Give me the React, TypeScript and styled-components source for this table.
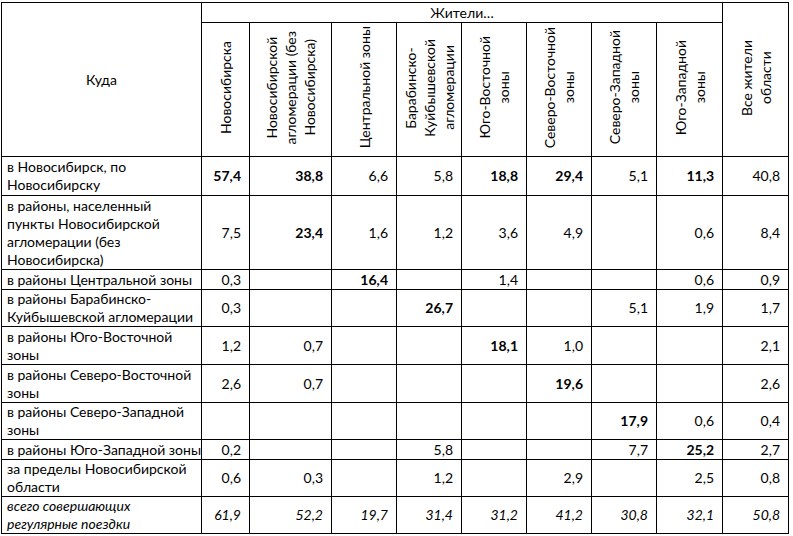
import React from "react";
import styled, { createGlobalStyle } from "styled-components";

const GlobalStyle = createGlobalStyle`
  body {
    margin: 0;
    background: #fff;
    font-family: "Lato", "Noto Sans", sans-serif;
    color: #000;
  }
`;

const widths = [200, 48, 82, 65, 65, 65, 65, 65, 66, 66];

const heads = [
  ["Новосибирска"],
  ["Новосибирской", "агломерации (без", "Новосибирска)"],
  ["Центральной зоны"],
  ["Барабинско-", "Куйбышевской", "агломерации"],
  ["Юго-Восточной", "зоны"],
  ["Северо-Восточной", "зоны"],
  ["Северо-Западной", "зоны"],
  ["Юго-Западной", "зоны"],
];

// "*" в начале значения — жирный шрифт
const rows = [
  {
    h: 39,
    label: ["в Новосибирск, по", "Новосибирску"],
    vals: ["*57,4", "*38,8", "6,6", "5,8", "*18,8", "*29,4", "5,1", "*11,3", "40,8"],
  },
  {
    h: 74,
    label: ["в районы, населенный", "пункты Новосибирской", "агломерации (без", "Новосибирска)"],
    vals: ["7,5", "*23,4", "1,6", "1,2", "3,6", "4,9", "", "0,6", "8,4"],
  },
  {
    h: 20,
    label: ["в районы Центральной зоны"],
    vals: ["0,3", "", "*16,4", "", "1,4", "", "", "0,6", "0,9"],
  },
  {
    h: 37,
    label: ["в районы Барабинско-", "Куйбышевской агломерации"],
    vals: ["0,3", "", "", "*26,7", "", "", "5,1", "1,9", "1,7"],
  },
  {
    h: 38,
    label: ["в районы Юго-Восточной", "зоны"],
    vals: ["1,2", "0,7", "", "", "*18,1", "1,0", "", "", "2,1"],
  },
  {
    h: 38,
    label: ["в районы Северо-Восточной", "зоны"],
    vals: ["2,6", "0,7", "", "", "", "*19,6", "", "", "2,6"],
  },
  {
    h: 37,
    label: ["в районы Северо-Западной", "зоны"],
    vals: ["", "", "", "", "", "", "*17,9", "0,6", "0,4"],
  },
  {
    h: 20,
    label: ["в районы Юго-Западной зоны"],
    vals: ["0,2", "", "", "5,8", "", "", "7,7", "*25,2", "2,7"],
  },
  {
    h: 37,
    label: ["за пределы Новосибирской", "области"],
    vals: ["0,6", "0,3", "", "1,2", "", "2,9", "", "2,5", "0,8"],
  },
];

const total = {
  h: 37,
  label: ["всего совершающих", "регулярные поездки"],
  vals: ["61,9", "52,2", "19,7", "31,4", "31,2", "41,2", "30,8", "32,1", "50,8"],
};

const Page = styled.div`
  padding: 2px 0 0 1px;
`;

const Table = styled.table`
  border-collapse: collapse;
  table-layout: fixed;
  width: 787px;
  font-size: 14px;
  line-height: 18px;
`;

const Cell = styled.td<{ $align?: string; $bold?: boolean; $italic?: boolean }>`
  border: 1px solid #000;
  padding: 0 8px 0 5px;
  vertical-align: middle;
  text-align: ${(p) => p.$align || "right"};
  font-weight: ${(p) => (p.$bold ? 700 : 400)};
  font-style: ${(p) => (p.$italic ? "italic" : "normal")};
  white-space: nowrap;
  overflow: hidden;
`;

const HeadCell = styled.th`
  border: 1px solid #000;
  padding: 0;
  font-weight: 400;
  text-align: center;
  vertical-align: middle;
`;

const Vertical = styled.div`
  display: inline-block;
  writing-mode: vertical-rl;
  transform: rotate(180deg);
  text-align: center;
  white-space: nowrap;
  line-height: 19px;
`;

const Lines = ({ lines }: { lines: string[] }) => (
  <>
    {lines.map((l, i) => (
      <React.Fragment key={i}>
        {i > 0 && <br />}
        {l}
      </React.Fragment>
    ))}
  </>
);

export default function App() {
  return (
    <Page>
      <GlobalStyle />
      <Table>
        <colgroup>
          {widths.map((w, i) => (
            <col key={i} style={{ width: w }} />
          ))}
        </colgroup>
        <thead>
          <tr style={{ height: 20 }}>
            <HeadCell rowSpan={2}>Куда</HeadCell>
            <HeadCell colSpan={8}>Жители…</HeadCell>
            <HeadCell rowSpan={2}>
              <Vertical>
                <Lines lines={["Все жители", "области"]} />
              </Vertical>
            </HeadCell>
          </tr>
          <tr style={{ height: 134 }}>
            {heads.map((h, i) => (
              <HeadCell key={i}>
                <Vertical>
                  <Lines lines={h} />
                </Vertical>
              </HeadCell>
            ))}
          </tr>
        </thead>
        <tbody>
          {rows.map((r, i) => (
            <tr key={i} style={{ height: r.h }}>
              <Cell $align="left">
                <Lines lines={r.label} />
              </Cell>
              {r.vals.map((v, j) => (
                <Cell key={j} $bold={v.startsWith("*")}>
                  {v.replace("*", "")}
                </Cell>
              ))}
            </tr>
          ))}
          <tr style={{ height: total.h }}>
            <Cell $align="left" $italic>
              <Lines lines={total.label} />
            </Cell>
            {total.vals.map((v, j) => (
              <Cell key={j} $italic>
                {v}
              </Cell>
            ))}
          </tr>
        </tbody>
      </Table>
    </Page>
  );
}
